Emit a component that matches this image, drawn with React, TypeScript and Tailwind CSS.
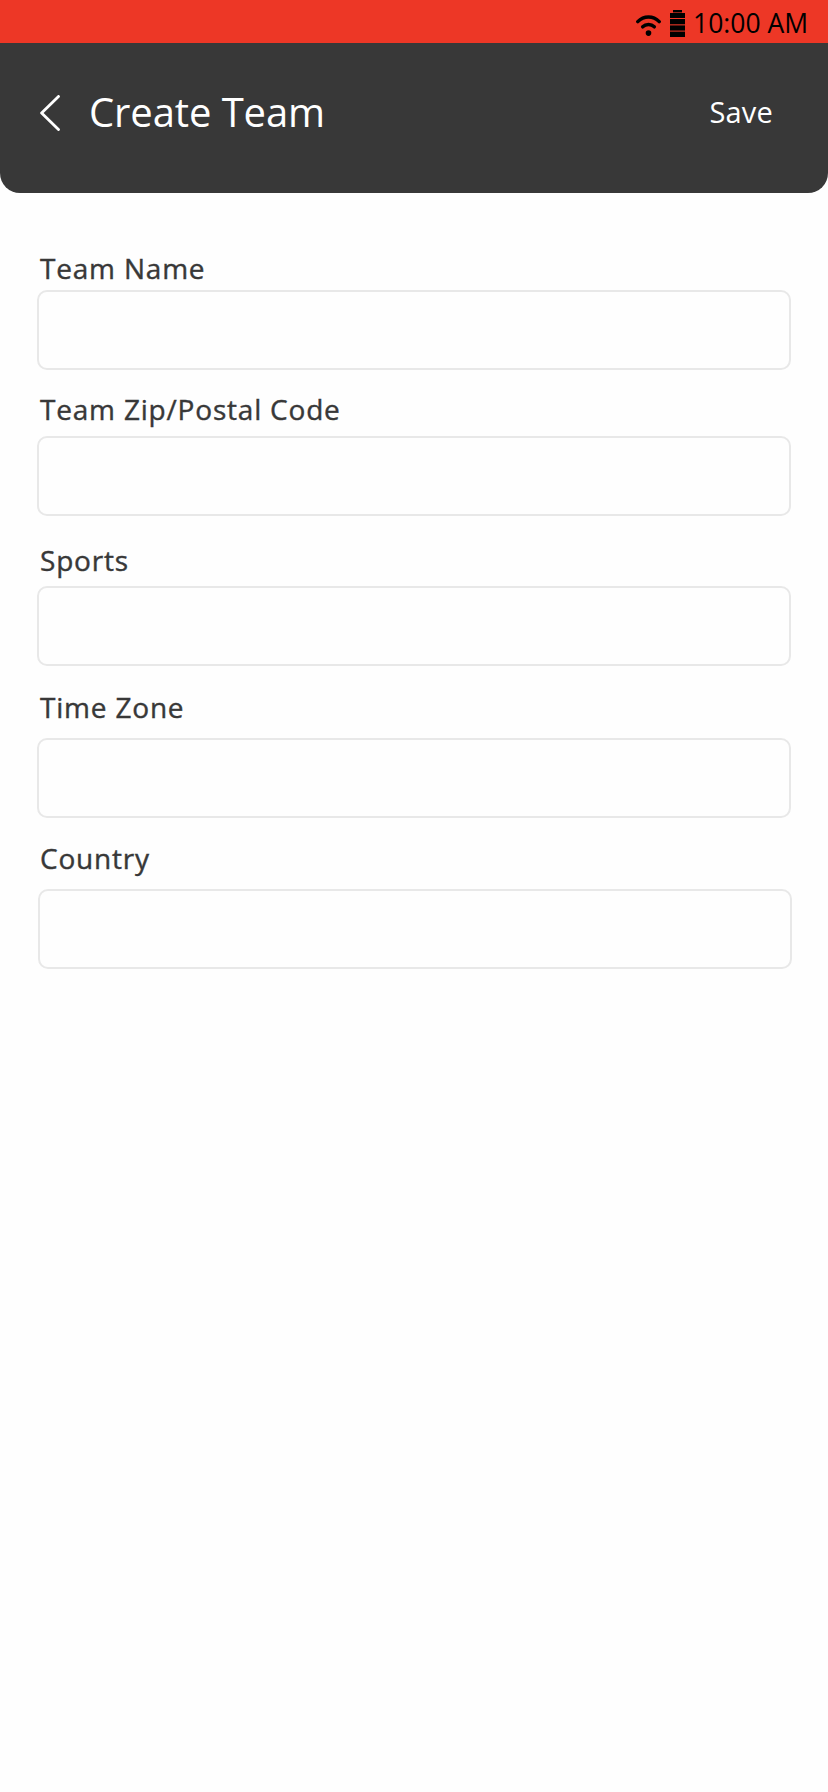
import React from "react";

type Field = { id: string; label: string; labelClass: string; inputClass: string };

const fields: Field[] = [
  { id: "name", label: "Team Name", labelClass: "mt-[56px]", inputClass: "mt-[3px]" },
  { id: "zip", label: "Team Zip/Postal Code", labelClass: "mt-[20px]", inputClass: "mt-[8px]" },
  { id: "sports", label: "Sports", labelClass: "mt-[25px]", inputClass: "mt-[7px]" },
  { id: "zone", label: "Time Zone", labelClass: "mt-[22px]", inputClass: "mt-[12px]" },
  { id: "country", label: "Country", labelClass: "mt-[21px]", inputClass: "mt-[12px] ml-px -mr-px" },
];

function WifiIcon() {
  return (
    <svg className="ml-[636px] mt-[15px] h-[21px] w-[25px] shrink-0" viewBox="0 0 25 21" fill="none" stroke="#000">
      <path d="M1.8 6.6C7.8 0.4 17.2 0.4 23.2 6.6" strokeWidth="3.5" strokeLinecap="round" />
      <path d="M6.7 11.8C9.9 8.7 15.1 8.7 18.3 11.8" strokeWidth="3.5" strokeLinecap="round" />
      <circle cx="12.5" cy="18.1" r="2.8" fill="#000" stroke="none" />
    </svg>
  );
}

function BatteryIcon() {
  return (
    <svg className="ml-[9px] mt-[10px] h-[27px] w-[15px] shrink-0" viewBox="0 0 15 27" fill="#000">
      <rect x="3" y="0" width="9" height="2.4" />
      <rect x="0" y="3" width="15" height="5" />
      <rect x="0" y="9" width="15" height="5.3" />
      <rect x="0" y="15.4" width="15" height="5.2" />
      <rect x="0" y="21.6" width="15" height="5.4" />
    </svg>
  );
}

export default function App() {
  return (
    <div className="min-h-[1792px] w-[828px] overflow-hidden bg-[#fefefe] font-['Open_Sans',sans-serif]">
      <div className="flex h-[43px] items-start bg-[#ed3726] text-black">
        <WifiIcon />
        <BatteryIcon />
        <span className="ml-[8px] mt-[5px] whitespace-nowrap text-[26.5px] leading-[36px]">10:00 AM</span>
      </div>
      <header className="flex h-[150px] items-start rounded-b-[20px] bg-[#383838] text-white">
        <button aria-label="Back" className="ml-[40px] mt-[52px] shrink-0">
          <svg className="h-[36px] w-[20px]" viewBox="0 0 20 36" fill="none" stroke="#fff" strokeWidth="2.8" strokeLinecap="round" strokeLinejoin="round">
            <path d="M18.5 1.4L1.6 18L18.5 34.6" />
          </svg>
        </button>
        <h1 className="ml-[29px] mt-[42px] whitespace-nowrap text-[40px] leading-[54px] tracking-[-0.1px]">Create Team</h1>
        <button className="ml-auto mr-[55px] mt-[49px] whitespace-nowrap text-[29px] leading-[40px] tracking-[0.2px]">Save</button>
      </header>
      <form className="flex flex-col px-[37px]">
        {fields.map((f) => (
          <React.Fragment key={f.id}>
            <label htmlFor={f.id} className={`${f.labelClass} ml-[3px] whitespace-nowrap text-[28px] leading-[38px] font-medium tracking-[0.8px] text-[#383838] [-webkit-text-stroke:0.4px_#383838]`}>
              {f.label}
            </label>
            <input id={f.id} className={`${f.inputClass} h-[80px] shrink-0 rounded-[10px] border-2 border-[#e8e8e8] px-4 text-[28px] outline-none`} />
          </React.Fragment>
        ))}
      </form>
    </div>
  );
}
